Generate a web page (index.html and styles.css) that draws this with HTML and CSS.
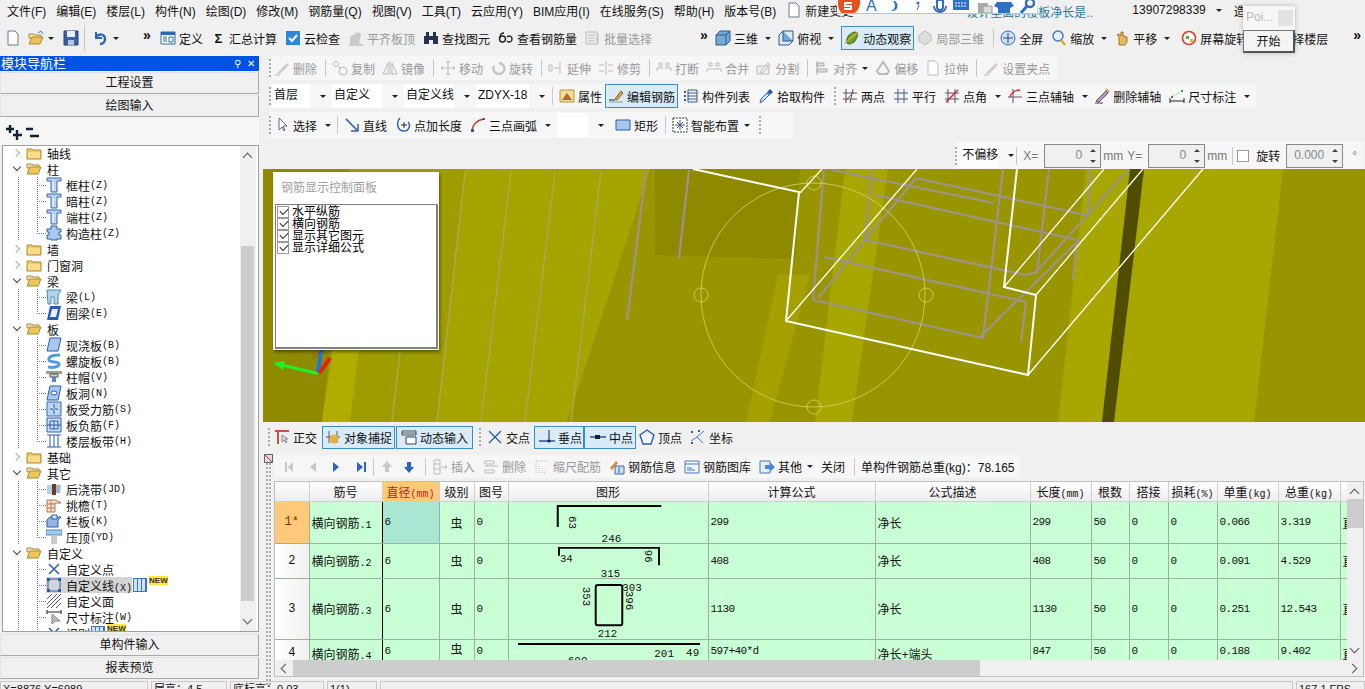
FILE: index.html
```html
<!DOCTYPE html>
<html lang="zh-CN">
<head>
    <meta charset="UTF-8">
    <title>钢筋算量</title>
    <link rel="stylesheet" href="styles.css">
</head>
<body>
<svg class="sprite" xmlns="http://www.w3.org/2000/svg">
    <symbol id="fold" viewBox="0 0 16 16"><path d="M1 4h5l1 1h8v9H1z" fill="#f3c95c" stroke="#a98a3c"/><path d="M2 7h12v6H2z" fill="#f9dc86"/></symbol>
    <symbol id="foldo" viewBox="0 0 16 16"><path d="M1 3h5l1 1h6v3H1z" fill="#f5e2a8" stroke="#a98a3c"/><path d="M1 13l3-7h11l-3 7z" fill="#f0c65a" stroke="#a98a3c"/></symbol>
    <symbol id="col" viewBox="0 0 16 16"><path d="M1 1h14v3h-4v11H5V4H1z" fill="#b9d3f2" stroke="#3a67b0"/><path d="M7 5v9" stroke="#fff"/></symbol>
    <symbol id="gz" viewBox="0 0 16 16"><path d="M5 1h6v3h4v3h-2v3h2v4h-4v1H5v-1H1v-4h2V7H1V4h4z" fill="#a9c8ee" stroke="#2f5ea8"/></symbol>
    <symbol id="beam" viewBox="0 0 16 16"><path d="M1 1h14l-3 5v9H8V8H5v7H2z" fill="#b4d4ee" stroke="#4a87bb"/></symbol>
    <symbol id="ring" viewBox="0 0 16 16"><path d="M4 1h11l-3 14H1z" fill="#2a5db0"/><path d="M6 4h6l-2 8H4z" fill="#e8f1fb"/></symbol>
    <symbol id="slab" viewBox="0 0 16 16"><path d="M4 1h11l-3 13H1z" fill="#a8c9ef" stroke="#2a5db0"/></symbol>
    <symbol id="spiral" viewBox="0 0 16 16"><path d="M14 2C6 2 2 4 3 7s10 1 10 4-6 4-11 3" fill="none" stroke="#4f9ae0" stroke-width="3"/></symbol>
    <symbol id="cap" viewBox="0 0 16 16"><path d="M0 2h16v3H0z" fill="#a29a8e"/><path d="M4 5h8v3H4z" fill="#c3d4ea" stroke="#555"/><path d="M6 8h4v5H6z" fill="#5c87c2"/></symbol>
    <symbol id="hole" viewBox="0 0 16 16"><path d="M4 1h11l-3 14H1z" fill="#a8c9ef" stroke="#2a5db0"/><ellipse cx="8" cy="8" rx="3" ry="2" fill="#fff" stroke="#2a5db0"/></symbol>
    <symbol id="bar1" viewBox="0 0 16 16"><path d="M1 1h14v14H1z" fill="#b8d3f0" stroke="#3a67b0"/><path d="M8 3v10M4 8h8" stroke="#2a5db0"/><path d="M5 5l6 6" stroke="#fff"/></symbol>
    <symbol id="bar2" viewBox="0 0 16 16"><path d="M1 1h14v14H1z" fill="#cde0f5" stroke="#2a5db0"/><path d="M4 4h8v8H4zM1 8h14M8 4v8" fill="none" stroke="#2a5db0"/></symbol>
    <symbol id="band" viewBox="0 0 16 16"><path d="M1 2h14M1 14h14M4 2v12M8 2v12M12 2v12" stroke="#2a5db0" fill="none"/></symbol>
    <symbol id="pour" viewBox="0 0 16 16"><path d="M1 4h5v9H1z" fill="#b8cde6"/><path d="M6 3h4v11H6z" fill="#6a3d24"/><path d="M10 4h5l-1 8h-4z" fill="#9cb8da"/></symbol>
    <symbol id="eave" viewBox="0 0 16 16"><path d="M1 3h9l5 3H9v9H1z" fill="#f7e3cf" stroke="#b5774a"/><path d="M1 7h8M1 11h8M5 3v12" stroke="#b5774a"/></symbol>
    <symbol id="rail" viewBox="0 0 16 16"><path d="M1 7l3-3h11l-3 3v7H1z" fill="#8fb7e0" stroke="#2a5db0"/><path d="M6 2h5v4H6z" fill="#dbe9f7" stroke="#2a5db0"/></symbol>
    <symbol id="top" viewBox="0 0 16 16"><path d="M0 1h16v5H0z" fill="#a8c9ef" stroke="#4a87bb"/><path d="M5 6h6v9H5z" fill="#c9c9c9"/></symbol>
    <symbol id="xp" viewBox="0 0 16 16"><path d="M3 3l10 10M13 3L3 13" stroke="#2a5db0" stroke-width="1.5"/></symbol>
    <symbol id="xl" viewBox="0 0 16 16"><path d="M2 2h12v12H2z" fill="none" stroke="#2a5db0"/><path d="M1 1h3v3H1zM12 1h3v3h-3zM1 12h3v3H1zM12 12h3v3h-3z" fill="#2a5db0"/></symbol>
    <symbol id="xa" viewBox="0 0 16 16"><path d="M1 6l5-5M1 11L11 1M1 15L15 1M5 15L15 5M10 15l5-5" stroke="#557" fill="none"/></symbol>
    <symbol id="dim" viewBox="0 0 16 16"><path d="M1 1v4M15 1v4M1 3h14" stroke="#222"/><path d="M6 5v10l3-3h5z" fill="#bbb" stroke="#888"/></symbol>
    <symbol id="new" viewBox="0 0 16 16"><path d="M3 1h7l3 3v11H3z" fill="#fff" stroke="#6a7a90"/></symbol>
    <symbol id="open" viewBox="0 0 16 16"><path d="M1 4h5l1 1h6v3H1z" fill="#f6e3a8" stroke="#a98a3c"/><path d="M1 14l3-7h11l-3 7z" fill="#efc253" stroke="#a98a3c"/><path d="M10 3l3-2 2 3" fill="none" stroke="#3a7bd0"/></symbol>
    <symbol id="save" viewBox="0 0 16 16"><path d="M1 1h14v14H1z" fill="#3d5fa8" stroke="#27407a"/><path d="M4 1h8v6H4z" fill="#e6edf7"/><path d="M5 10h6v5H5z" fill="#b8c4d8"/></symbol>
    <symbol id="undo" viewBox="0 0 16 16"><path d="M3 2v6h6" fill="none" stroke="#3164b8" stroke-width="2"/><path d="M3 7c3-4 9-3 9 2 0 3-2 5-5 5" fill="none" stroke="#3164b8" stroke-width="2.4"/></symbol>
    <symbol id="def" viewBox="0 0 16 16"><path d="M1 2h14v12H1z" fill="#fff" stroke="#2a6aa8"/><path d="M1 2h14v3H1z" fill="#2a6aa8"/><path d="M3 7h4M3 9h4M3 11h4M9 7h4v5H9z" stroke="#2a6aa8" fill="none"/></symbol>
    <symbol id="cloud" viewBox="0 0 16 16"><path d="M1 1h14v14H1z" fill="#2f86d6" rx="2"/><path d="M4 8l3 3 5-6" fill="none" stroke="#fff" stroke-width="2"/></symbol>
    <symbol id="align" viewBox="0 0 16 16"><path d="M2 14V7l8-5 3 2-2 10z" fill="#c9c9c9"/><path d="M1 15h14" stroke="#aaa"/></symbol>
    <symbol id="find" viewBox="0 0 16 16"><path d="M1 6h5v8H1zM10 6h5v8h-5zM3 2h3v4H3zM10 2h3v4h-3zM6 6h4v4H6z" fill="#24344e"/></symbol>
    <symbol id="see" viewBox="0 0 16 16"><circle cx="4.5" cy="9" r="3" fill="none" stroke="#222" stroke-width="1.4"/><path d="M2 8c0-3 1-5 4-5" fill="none" stroke="#222" stroke-width="1.4"/><path d="M9 7c2-2 5-1 5 2s-3 4-5 2" fill="none" stroke="#222" stroke-width="1.4"/></symbol>
    <symbol id="batch" viewBox="0 0 16 16"><path d="M1 2h11v12H1z" fill="#eee" stroke="#bbb"/><path d="M3 5h7M3 8h7M3 11h7M13 4v10" stroke="#bbb"/></symbol>
    <symbol id="d3" viewBox="0 0 16 16"><path d="M1 5l4-4h10v10l-4 4H1z" fill="#76a8d6" stroke="#2a5a8c"/><path d="M1 5h10v10M11 5l4-4" fill="none" stroke="#2a5a8c"/></symbol>
    <symbol id="plan" viewBox="0 0 16 16"><path d="M1 5l4-4h10v10l-4 4H1z" fill="#dbe9f7" stroke="#2a5a8c"/><path d="M5 1v10h10" fill="#76a8d6" stroke="#2a5a8c"/></symbol>
    <symbol id="orbit" viewBox="0 0 16 16"><ellipse cx="8" cy="8" rx="4" ry="7" transform="rotate(40 8 8)" fill="#6aa52d" stroke="#3c6a12"/><path d="M1 13L14 2" stroke="#e2a92d" stroke-width="1.5"/></symbol>
    <symbol id="part" viewBox="0 0 16 16"><path d="M8 1l6 4v6l-6 4-6-4V5z" fill="#ddd" stroke="#bbb"/></symbol>
    <symbol id="full" viewBox="0 0 16 16"><circle cx="8" cy="8" r="7" fill="#cfe0f5" stroke="#3a67b0"/><path d="M8 3v10M3 8h10" stroke="#24447e"/></symbol>
    <symbol id="zoom" viewBox="0 0 16 16"><circle cx="7" cy="6" r="5" fill="#e8f1fb" stroke="#4a76b8" stroke-width="1.4"/><path d="M10 10l4 5" stroke="#d6a63a" stroke-width="2.4"/></symbol>
    <symbol id="pan" viewBox="0 0 16 16"><path d="M5 15V7L3 5l2-1 2 2V2h2v4h2v1h2v5l-2 3z" fill="#e9b75d" stroke="#9a7530"/></symbol>
    <symbol id="rot" viewBox="0 0 16 16"><circle cx="8" cy="8" r="6.5" fill="#fff" stroke="#d7402c" stroke-width="1.6"/><path d="M5 6h3v3H5z" fill="#4aa84a"/><path d="M9 9h3v3H9z" fill="#e2b32d"/></symbol>
    <symbol id="del" viewBox="0 0 16 16"><path d="M3 13L13 3l2 2-9 9z" fill="#ccc"/><path d="M1 15h5" stroke="#bbb"/></symbol>
    <symbol id="copy" viewBox="0 0 16 16"><circle cx="4" cy="4" r="2.5" fill="none" stroke="#bbb"/><circle cx="11" cy="11" r="4" fill="none" stroke="#bbb"/><path d="M7 7l2 2" stroke="#bbb"/></symbol>
    <symbol id="mirror" viewBox="0 0 16 16"><path d="M8 1v14M6 3L1 14h5zM10 3l5 11h-5z" fill="none" stroke="#bbb"/></symbol>
    <symbol id="move" viewBox="0 0 16 16"><path d="M8 1v14M1 8h14M8 1L6 3M8 1l2 2M8 15l-2-2M8 15l2-2M1 8l2-2M1 8l2 2M15 8l-2-2M15 8l-2 2" stroke="#bbb" fill="none"/></symbol>
    <symbol id="turn" viewBox="0 0 16 16"><path d="M9 3a5.5 5.5 0 1 1-5 3" fill="none" stroke="#c4c4c4" stroke-width="2.4"/></symbol>
    <symbol id="ext" viewBox="0 0 16 16"><path d="M1 5h3v6H1zM6 8h5M12 2v12" stroke="#bbb" fill="none"/></symbol>
    <symbol id="trim" viewBox="0 0 16 16"><path d="M8 1v14M1 5h5M10 5h5M1 11h5M10 11h5" stroke="#bbb" fill="none"/></symbol>
    <symbol id="brk" viewBox="0 0 16 16"><path d="M1 11V8h6M9 8h6v3M3 3h3v3H3zM10 3h3v3h-3z" stroke="#bbb" fill="none"/></symbol>
    <symbol id="merge" viewBox="0 0 16 16"><path d="M1 12V9h14v3M3 3h3v3H3zM10 3h3v3h-3z" stroke="#bbb" fill="none"/></symbol>
    <symbol id="split" viewBox="0 0 16 16"><path d="M1 14h12V6H1zM4 12l8-9 2 2-8 8z" fill="#eee" stroke="#bbb"/></symbol>
    <symbol id="alg" viewBox="0 0 16 16"><path d="M3 1v14M3 3h7v3H3zM3 9h10v3H3z" fill="#ddd" stroke="#aaa"/></symbol>
    <symbol id="off" viewBox="0 0 16 16"><path d="M2 11l6-9 6 9-2 3H4z" fill="none" stroke="#bbb" stroke-width="2"/></symbol>
    <symbol id="str" viewBox="0 0 16 16"><path d="M3 1h7l3 3v11H3z" fill="#fff" stroke="#bbb"/></symbol>
    <symbol id="attr" viewBox="0 0 16 16"><path d="M1 2h14v12H1z" fill="#f5dd95" stroke="#b5954a"/><path d="M3 12l5-7 5 7z" fill="#a66d2a"/></symbol>
    <symbol id="edit" viewBox="0 0 16 16"><path d="M1 12h6" stroke="#222"/><path d="M7 11l6-8 2 2-6 7z" fill="#e9a94a" stroke="#80602a"/><path d="M1 14h14" stroke="#999"/></symbol>
    <symbol id="list" viewBox="0 0 16 16"><path d="M5 2h9v12H5zM5 5h9M5 8h9M5 11h9" fill="none" stroke="#355a90"/><path d="M1 3h2v2H1zM1 7h2v2H1zM1 11h2v2H1z" fill="#355a90"/></symbol>
    <symbol id="pick" viewBox="0 0 16 16"><path d="M2 15l1-4 6-6 2 2-6 6z" fill="#cfe4f7" stroke="#2a5db0"/><path d="M9 4l3-3 3 3-3 3z" fill="#2a5db0"/></symbol>
    <symbol id="two" viewBox="0 0 16 16"><path d="M4 1v14M11 1L8 15M1 5h14M1 11h14" stroke="#556" fill="none"/><path d="M3 13l9-9" stroke="#c33"/></symbol>
    <symbol id="para" viewBox="0 0 16 16"><path d="M5 1v14M11 1v14M1 5h14M1 11h14" stroke="#3a5a90" fill="none"/></symbol>
    <symbol id="ang" viewBox="0 0 16 16"><path d="M4 1v14M11 1v14M1 5h14M1 11h14" stroke="#556" fill="none"/><path d="M2 14L14 2" stroke="#d22" stroke-width="1.5"/></symbol>
    <symbol id="tri" viewBox="0 0 16 16"><path d="M6 1v14M1 9h14" stroke="#556"/><path d="M3 9c1-4 5-7 10-7" fill="none" stroke="#d22" stroke-width="1.4"/></symbol>
    <symbol id="dela" viewBox="0 0 16 16"><path d="M2 13L12 3l2 2-9 9z" fill="#b79bdc" stroke="#555"/><path d="M1 15h8" stroke="#444"/><path d="M12 1l3 3" stroke="#d6a63a" stroke-width="2"/></symbol>
    <symbol id="dima" viewBox="0 0 16 16"><path d="M1 10v5M15 10v5M1 13h14" stroke="#222"/><path d="M2 8h2v2H2zM12 2h2v2h-2z" fill="#3a9a4a"/><path d="M4 8l8-4" stroke="#3a9a4a" stroke-dasharray="1 2"/></symbol>
    <symbol id="arrow" viewBox="0 0 16 16"><path d="M5 1v12l3-3 2 4 1-1-2-4h4z" fill="#fff" stroke="#667"/></symbol>
    <symbol id="line" viewBox="0 0 16 16"><path d="M2 2l11 11" stroke="#2a5db0" stroke-width="1.6"/><path d="M14 7v7H7" fill="none" stroke="#2a5db0" stroke-width="1.4"/></symbol>
    <symbol id="plen" viewBox="0 0 16 16"><path d="M5 1C1 5 2 13 8 14s8-6 5-9" fill="none" stroke="#2a5db0" stroke-width="1.4"/><path d="M9 5v6M6 8h6" stroke="#222"/></symbol>
    <symbol id="arc" viewBox="0 0 16 16"><path d="M2 15C2 8 7 3 14 2" fill="none" stroke="#c0392b" stroke-width="1.4"/><path d="M1 12h3v3H1zM13 1h2v2h-2z" fill="#2a5db0"/></symbol>
    <symbol id="rect" viewBox="0 0 16 16"><path d="M1 3h14v10H1z" fill="#a9c6ee" stroke="#2f5ea8"/></symbol>
    <symbol id="auto" viewBox="0 0 16 16"><path d="M1 1h14v14H1z" fill="#fff" stroke="#333" stroke-dasharray="2 1"/><path d="M8 3v10M3 8h10" stroke="#2a5db0"/><path d="M5 5l6 6M11 5l-6 6" stroke="#555"/></symbol>
    <symbol id="ortho" viewBox="0 0 16 16"><path d="M1 2h14M4 2v13" stroke="#c4563a" stroke-width="2"/><path d="M8 6v7l2-2 2 3 1-1-2-3h3z" fill="#ddd" stroke="#889"/></symbol>
    <symbol id="snap" viewBox="0 0 16 16"><path d="M1 8h14M4 2v12M12 2v12" stroke="#556"/><circle cx="9" cy="10" r="4.5" fill="#e6b23d"/></symbol>
    <symbol id="dyn" viewBox="0 0 16 16"><path d="M1 2h14v4H1z" fill="#fff" stroke="#345"/><path d="M5 8h10v7H5z" fill="#fff" stroke="#345"/><path d="M1 4h14" stroke="#345"/></symbol>
    <symbol id="cross" viewBox="0 0 16 16"><path d="M2 2l12 12M14 2L2 14" stroke="#2a5db0" stroke-width="1.4"/></symbol>
    <symbol id="perp" viewBox="0 0 16 16"><path d="M0 12h16" stroke="#2a5db0" stroke-width="1.6"/><path d="M10 1v10" stroke="#222"/><circle cx="10" cy="12" r="1.6" fill="#222"/></symbol>
    <symbol id="mid" viewBox="0 0 16 16"><path d="M0 8h16" stroke="#2a5db0" stroke-width="1.6"/><path d="M5 6h5v4H5z" fill="#222"/></symbol>
    <symbol id="vert" viewBox="0 0 16 16"><path d="M8 1l7 5-3 9H4L1 6z" fill="#f2f7fd" stroke="#2a5db0" stroke-width="1.4"/></symbol>
    <symbol id="coord" viewBox="0 0 16 16"><path d="M1 12l6-4 6 6M7 8l7-6" stroke="#3a7ad0" fill="none"/><path d="M1 2h2v2H1zM8 1h2v2H8zM1 13h2v2H1z" fill="#555"/></symbol>
    <symbol id="ins" viewBox="0 0 16 16"><path d="M2 1h6v14H2zM2 5h6M2 10h6M9 8h6M13 6l2 2-2 2" fill="none" stroke="#bbb"/></symbol>
    <symbol id="rem" viewBox="0 0 16 16"><path d="M2 2h9v3H2zM2 7h13M2 11h9v3H2z" fill="none" stroke="#bbb"/></symbol>
    <symbol id="scale" viewBox="0 0 16 16"><path d="M2 3v12M5 7v8M8 9v6M11 11v4M2 2h12" stroke="#bbb" stroke-dasharray="1 1"/></symbol>
    <symbol id="info" viewBox="0 0 16 16"><path d="M6 7h9v8H6z" fill="#cfe0f5" stroke="#3a67b0"/><path d="M1 9l6-7 2 2-6 7z" fill="#d98a3a"/><path d="M10 8v6" stroke="#3a67b0"/></symbol>
    <symbol id="lib" viewBox="0 0 16 16"><path d="M1 2h14v12H1z" fill="#f2f7fd" stroke="#4a76b8"/><path d="M1 5h14" stroke="#4a76b8"/><path d="M3 9h5M3 11h8" stroke="#4a76b8"/></symbol>
    <symbol id="more" viewBox="0 0 16 16"><path d="M1 2h10v12H1z" fill="#e5eef9" stroke="#4a76b8"/><path d="M6 6h5V3l5 5-5 5v-3H6z" fill="#4a8ad4"/></symbol>
</svg>

<header class="menubar">
    <span>文件(F)</span><span>编辑(E)</span><span>楼层(L)</span><span>构件(N)</span><span>绘图(D)</span><span>修改(M)</span><span>钢筋量(Q)</span><span>视图(V)</span><span>工具(T)</span><span>云应用(Y)</span><span>BIM应用(I)</span><span>在线服务(S)</span><span>帮助(H)</span><span>版本号(B)</span>
    <span class="tool newjob"><svg class="ico"><use href="#new"/></svg>新建变更</span>
    <span class="tip">设计里面的楼板净长是..</span>
    <span class="phone">13907298339</span><i class="arr"></i>
    <span class="cost">造价豆</span>
</header>

<div class="ime">
    <svg viewBox="0 0 262 14" width="262" height="14">
        <path d="M1 0h22c1 9-5 15-12 15S0 10 1 0z" fill="#e8501f"/><path d="M15 3H8v3h6v3H7" fill="none" stroke="#fff" stroke-width="2"/>
        <path d="M56 1c3 3 3 8-2 10 6 1 9-6 4-10z" fill="#2f6fc4"/>
        <circle cx="81" cy="3" r="1.6" fill="#2f6fc4"/><path d="M82 5l-2 5" stroke="#2f6fc4"/>
        <path d="M100 0h6v7a3 3 0 0 1-6 0zM97 6c0 8 12 8 12 0M103 11v3" fill="none" stroke="#2f6fc4" stroke-width="2"/>
        <path d="M116 0h16v10h-16z" fill="#2f6fc4"/><path d="M118 3h12M118 6h12" stroke="#fff" stroke-dasharray="2 1"/>
        <path d="M141 3h10v10h-10z" fill="#aaa"/><path d="M146 6h9v7h-9z" fill="#ddd" stroke="#999"/>
        <path d="M160 2h14l3 4-4 2v6h-12V8l-4-2z" fill="#2f6fc4"/>
        <circle cx="193" cy="3" r="4" fill="none" stroke="#2f6fc4" stroke-width="2.5"/><path d="M190 6l-6 7" stroke="#2f6fc4" stroke-width="3"/>
    </svg>
    <b class="ime-a">A</b>
</div>

<div class="popup">
    <div class="popup-head">Poi...<i></i></div>
    <div class="popup-btn">开始</div>
</div>

<div class="topbar">
    <svg class="ico first"><use href="#new"/></svg>
    <svg class="ico"><use href="#open"/></svg><i class="arr"></i>
    <svg class="ico save"><use href="#save"/></svg>
    <i class="sep tall"></i>
    <svg class="ico"><use href="#undo"/></svg><i class="arr"></i>
    <span class="more">»</span>
    <span class="tool"><svg class="ico"><use href="#def"/></svg>定义</span>
    <span class="tool"><b class="sum">Σ</b>汇总计算</span>
    <span class="tool"><svg class="ico"><use href="#cloud"/></svg>云检查</span>
    <span class="tool off"><svg class="ico"><use href="#align"/></svg>平齐板顶</span>
    <span class="tool"><svg class="ico"><use href="#find"/></svg>查找图元</span>
    <span class="tool"><svg class="ico"><use href="#see"/></svg>查看钢筋量</span>
    <span class="tool off"><svg class="ico"><use href="#batch"/></svg>批量选择</span>
    <span class="more far">»</span>
    <span class="tool drop"><svg class="ico"><use href="#d3"/></svg>三维<i class="arr"></i></span>
    <span class="tool drop"><svg class="ico"><use href="#plan"/></svg>俯视<i class="arr"></i></span>
    <span class="tool active"><svg class="ico"><use href="#orbit"/></svg>动态观察</span>
    <span class="tool off"><svg class="ico"><use href="#part"/></svg>局部三维</span>
    <i class="sep"></i>
    <span class="tool"><svg class="ico"><use href="#full"/></svg>全屏</span>
    <span class="tool drop"><svg class="ico"><use href="#zoom"/></svg>缩放<i class="arr"></i></span>
    <span class="tool drop wide"><svg class="ico"><use href="#pan"/></svg>平移<i class="arr"></i></span>
    <span class="tool"><svg class="ico"><use href="#rot"/></svg>屏幕旋转</span>
    <span class="tool floor">选择楼层</span>
    <span class="more end">»</span>
</div>

<div class="work">
    <aside class="nav">
        <div class="nav-title"><span>模块导航栏</span><span class="pin">⚲ &nbsp;✕</span></div>
        <div class="nav-btn">工程设置</div>
        <div class="nav-btn">绘图输入</div>
        <div class="nav-tools">
            <svg width="34" height="16" viewBox="0 0 34 16"><path d="M4 0v8M0 4h8M11 5v10M7 10h9" stroke="#123" stroke-width="2.4" fill="none"/><path d="M20 4h7M24 11h9" stroke="#123" stroke-width="2.4"/></svg>
        </div>
        <div class="tree">
            <div class="tree-list">
                <div class="node"><i class="exp"></i><svg class="ico"><use href="#fold"/></svg>轴线</div>
                <div class="node"><i class="exp open"></i><svg class="ico"><use href="#foldo"/></svg>柱</div>
                <div class="leaf"><svg class="ico"><use href="#col"/></svg>框柱<em>(Z)</em></div>
                <div class="leaf"><svg class="ico"><use href="#col"/></svg>暗柱<em>(Z)</em></div>
                <div class="leaf"><svg class="ico"><use href="#col"/></svg>端柱<em>(Z)</em></div>
                <div class="leaf last"><svg class="ico"><use href="#gz"/></svg>构造柱<em>(Z)</em></div>
                <div class="node"><i class="exp"></i><svg class="ico"><use href="#fold"/></svg>墙</div>
                <div class="node"><i class="exp"></i><svg class="ico"><use href="#fold"/></svg>门窗洞</div>
                <div class="node"><i class="exp open"></i><svg class="ico"><use href="#foldo"/></svg>梁</div>
                <div class="leaf"><svg class="ico"><use href="#beam"/></svg>梁<em>(L)</em></div>
                <div class="leaf last"><svg class="ico"><use href="#ring"/></svg>圈梁<em>(E)</em></div>
                <div class="node"><i class="exp open"></i><svg class="ico"><use href="#foldo"/></svg>板</div>
                <div class="leaf"><svg class="ico"><use href="#slab"/></svg>现浇板<em>(B)</em></div>
                <div class="leaf"><svg class="ico"><use href="#spiral"/></svg>螺旋板<em>(B)</em></div>
                <div class="leaf"><svg class="ico"><use href="#cap"/></svg>柱帽<em>(V)</em></div>
                <div class="leaf"><svg class="ico"><use href="#hole"/></svg>板洞<em>(N)</em></div>
                <div class="leaf"><svg class="ico"><use href="#bar1"/></svg>板受力筋<em>(S)</em></div>
                <div class="leaf"><svg class="ico"><use href="#bar2"/></svg>板负筋<em>(F)</em></div>
                <div class="leaf last"><svg class="ico"><use href="#band"/></svg>楼层板带<em>(H)</em></div>
                <div class="node"><i class="exp"></i><svg class="ico"><use href="#fold"/></svg>基础</div>
                <div class="node"><i class="exp open"></i><svg class="ico"><use href="#foldo"/></svg>其它</div>
                <div class="leaf"><svg class="ico"><use href="#pour"/></svg>后浇带<em>(JD)</em></div>
                <div class="leaf"><svg class="ico"><use href="#eave"/></svg>挑檐<em>(T)</em></div>
                <div class="leaf"><svg class="ico"><use href="#rail"/></svg>栏板<em>(K)</em></div>
                <div class="leaf last"><svg class="ico"><use href="#top"/></svg>压顶<em>(YD)</em></div>
                <div class="node"><i class="exp open"></i><svg class="ico"><use href="#foldo"/></svg>自定义</div>
                <div class="leaf"><svg class="ico"><use href="#xp"/></svg>自定义点</div>
                <div class="leaf sel-leaf"><svg class="ico"><use href="#xl"/></svg><span class="hl">自定义线<em>(X)</em></span><i class="grid-ico"></i><b class="tag">NEW</b></div>
                <div class="leaf"><svg class="ico"><use href="#xa"/></svg>自定义面</div>
                <div class="leaf"><svg class="ico"><use href="#dim"/></svg>尺寸标注<em>(W)</em></div>
                <div class="leaf"><svg class="ico"><use href="#xp"/></svg>识别<i class="grid-ico"></i><b class="tag">NEW</b></div>
            </div>
            <div class="tree-scroll">
                <span class="chev up"></span>
                <div class="tree-thumb"></div>
                <span class="chev down"></span>
            </div>
        </div>
        <div class="nav-btn low">单构件输入</div>
        <div class="nav-btn">报表预览</div>
    </aside>

    <main class="panel">
        <div class="row">
            <div class="bar off-all">
                <i class="grip"></i>
                <span class="tool"><svg class="ico"><use href="#del"/></svg>删除</span><i class="sep"></i>
                <span class="tool"><svg class="ico"><use href="#copy"/></svg>复制</span>
                <span class="tool"><svg class="ico"><use href="#mirror"/></svg>镜像</span><i class="sep"></i>
                <span class="tool"><svg class="ico"><use href="#move"/></svg>移动</span>
                <span class="tool"><svg class="ico"><use href="#turn"/></svg>旋转</span><i class="sep"></i>
                <span class="tool"><svg class="ico"><use href="#ext"/></svg>延伸</span>
                <span class="tool"><svg class="ico"><use href="#trim"/></svg>修剪</span><i class="sep"></i>
                <span class="tool"><svg class="ico"><use href="#brk"/></svg>打断</span>
                <span class="tool"><svg class="ico"><use href="#merge"/></svg>合并</span>
                <span class="tool"><svg class="ico"><use href="#split"/></svg>分割</span><i class="sep"></i>
                <span class="tool drop-s"><svg class="ico"><use href="#alg"/></svg>对齐<i class="arr"></i></span>
                <span class="tool"><svg class="ico"><use href="#off"/></svg>偏移</span>
                <span class="tool"><svg class="ico"><use href="#str"/></svg>拉伸</span><i class="sep"></i>
                <span class="tool"><svg class="ico"><use href="#del"/></svg>设置夹点</span>
            </div>
        </div>
        <div class="row row-b">
            <div class="bar">
                <i class="grip"></i>
                <span class="sel w60"><b>首层</b><i class="arr"></i></span>
                <span class="sel w72"><b>自定义</b><i class="arr"></i></span>
                <span class="sel w72"><b>自定义线</b><i class="arr"></i></span>
                <span class="sel w75"><b>ZDYX-18</b><i class="arr"></i></span>
                <i class="sep"></i>
                <span class="tool"><svg class="ico"><use href="#attr"/></svg>属性</span>
                <span class="tool active slim"><svg class="ico"><use href="#edit"/></svg>编辑钢筋</span>
                <span class="tool"><svg class="ico"><use href="#list"/></svg>构件列表</span>
                <span class="tool"><svg class="ico"><use href="#pick"/></svg>拾取构件</span>
                <i class="grip mid"></i>
                <span class="tool"><svg class="ico"><use href="#two"/></svg>两点</span>
                <span class="tool"><svg class="ico"><use href="#para"/></svg>平行</span>
                <span class="tool drop"><svg class="ico"><use href="#ang"/></svg>点角<i class="arr"></i></span>
                <span class="tool drop"><svg class="ico"><use href="#tri"/></svg>三点辅轴<i class="arr"></i></span>
                <span class="tool"><svg class="ico"><use href="#dela"/></svg>删除辅轴</span>
                <span class="tool drop"><svg class="ico"><use href="#dima"/></svg>尺寸标注<i class="arr"></i></span>
            </div>
        </div>
        <div class="row row-b tall-row">
            <div class="bar">
                <i class="grip"></i>
                <span class="tool drop"><svg class="ico"><use href="#arrow"/></svg>选择<i class="arr"></i></span>
                <i class="sep"></i>
                <span class="tool"><svg class="ico"><use href="#line"/></svg>直线</span>
                <span class="tool"><svg class="ico"><use href="#plen"/></svg>点加长度</span>
                <span class="tool drop"><svg class="ico"><use href="#arc"/></svg>三点画弧<i class="arr"></i></span>
                <span class="sel blank"><b></b><i class="arr"></i></span>
                <span class="tool rect-tool"><svg class="ico"><use href="#rect"/></svg>矩形</span>
                <i class="sep"></i>
                <span class="tool drop-s"><svg class="ico"><use href="#auto"/></svg>智能布置<i class="arr"></i></span>
                <i class="grip mid"></i>
                <span class="stub"></span>
            </div>
        </div>
        <div class="row offset-row">
            <div class="bar">
                <i class="grip"></i>
                <span class="sel w55"><b>不偏移</b><i class="arr"></i></span>
                <i class="sep"></i>
                <span class="lbl">X=</span><span class="spin"><b>0</b></span>
                <span class="lbl unit">mm</span><span class="lbl">Y=</span><span class="spin"><b>0</b></span>
                <span class="lbl unit">mm</span><i class="sep near"></i>
                <i class="check"></i>
                <span class="rot-lbl">旋转</span><span class="spin"><b>0.000</b></span>
                <span class="lbl deg">°</span>
            </div>
        </div>

        <div class="view">
            <svg class="scene" viewBox="263 169 1102 253" width="1102" height="253">
                <path d="M263 169h1102v253H263z" fill="#999500"/>
                <path d="M263 169h90l-25 253h-65z" fill="#8f8b00"/>
                <path d="M350 169h115l-28 253h-115z" fill="#9f9c00"/>
                <path d="M340 300h25l-15 122h-28z" fill="#b0ad00"/>
                <path d="M465 169h185l-83 253H437z" fill="#a6a400"/>
                <path d="M655 169h145l-4 90-141-4z" fill="#8e8a00"/>
                <path d="M845 169h43l-36 253h-37z" fill="#a8a600"/>
                <path d="M778 275h32l-40 147h-24z" fill="#a3a000"/>
                <path d="M1086 169h44l-28 253h-44z" fill="#a8a600"/>
                <path d="M1144 169h139l-29 253h-140z" fill="#a8a600"/>
                <path d="M1130 169h14l-30 253h-12z" fill="#504c00"/>
                <g class="faint">
                    <path d="M465 172l-28 250M511 172l-30 250M555 172l-30 250M601 172l-30 250M400 352l-8 70"/>
                </g>
                <g class="rebar">
                    <path d="M689 170l-10 88M646 172l-19 148"/>
                    <path d="M813 300l170 38M824 257l202 45M865 240l161 35M875 195l202 45M831 170l163 33M916 178l170 37"/>
                    <path d="M824 169l-11 131M872 169l-7 71M1003 169l-20 169M1049 169l-12 104M1026 302l-5 40M1077 240l-4 40M1090 169l-2 46"/>
                    <path d="M865 240l51-62M818 298l47-58M980 337l99-97M1036 272l92-102M1026 275l10-3"/>
                </g>
                <g class="axis-ring">
                    <circle cx="813" cy="295" r="112"/>
                    <circle cx="701" cy="295" r="7"/><circle cx="926" cy="295" r="7"/><circle cx="814" cy="183" r="7"/><circle cx="814" cy="407" r="7"/>
                </g>
                <g class="thin-white">
                    <path d="M786 321l131-152M1028 375l175-206M1036 295l107-126M1004 287l100-118M800 193l22-24"/>
                </g>
                <g class="wire">
                    <path d="M693 169l106 23-13 129 242 54 8-80-32-8 13-118"/>
                </g>
                <path d="M318 372l-34-8 1-3-12 2 10 7 1-3 33 8z" fill="#22f02c"/>
                <path d="M316 372l3-22h4l-3 22z" fill="#1e74d8"/>
                <path d="M318 372l10-15 4 2-11 15z" fill="#e81e10"/>
                <path d="M312 352l8 7M320 352l-8 7" stroke="#a0522d"/>
            </svg>
            <div class="rebar-box">
                <div class="rebar-title">钢筋显示控制面板</div>
                <div class="rebar-list">
                    <label><i class="check on"></i>水平纵筋</label>
                    <label><i class="check on"></i>横向钢筋</label>
                    <label><i class="check on"></i>显示其它图元</label>
                    <label><i class="check on"></i>显示详细公式</label>
                </div>
            </div>
        </div>

        <div class="snapbar">
            <i class="grip"></i>
            <span class="tool ortho"><svg class="ico"><use href="#ortho"/></svg>正交</span>
            <span class="tool on s1"><svg class="ico"><use href="#snap"/></svg>对象捕捉</span>
            <span class="tool on s2"><svg class="ico"><use href="#dyn"/></svg>动态输入</span>
            <i class="grip"></i>
            <span class="tool"><svg class="ico"><use href="#cross"/></svg>交点</span>
            <span class="tool on s3"><svg class="ico"><use href="#perp"/></svg>垂点</span>
            <span class="tool on s4"><svg class="ico"><use href="#mid"/></svg>中点</span>
            <span class="tool wide"><svg class="ico"><use href="#vert"/></svg>顶点</span>
            <span class="tool"><svg class="ico"><use href="#coord"/></svg>坐标</span>
        </div>

        <div class="editor">
            <div class="side-grip"><span class="x-mark"></span></div>
            <div class="editor-body">
                <div class="rebar-bar">
                    <span class="nav-arrows">
                        <svg width="100" height="14" viewBox="0 0 100 14"><path d="M1 2h2v10H1zM9 2v10L4 7z" fill="#c8c8c8"/><path d="M32 2v10l-6-5z" fill="#c8c8c8"/><path d="M49 2v10l6-5z" fill="#2a62c8"/><path d="M73 2v10l6-5zM80 2h2v10h-2z" fill="#2a62c8"/></svg>
                    </span>
                    <i class="sep"></i>
                    <svg class="arrows" width="38" height="14" viewBox="0 0 38 14"><path d="M5 1l5 6H7v5H3V7H0z" fill="#c8c8c8"/><path d="M27 13l5-6h-3V2h-4v5h-3z" fill="#2a62c8"/></svg>
                    <i class="sep"></i>
                    <span class="tool off"><svg class="ico"><use href="#ins"/></svg>插入</span>
                    <span class="tool off"><svg class="ico"><use href="#rem"/></svg>删除</span>
                    <span class="tool off"><svg class="ico"><use href="#scale"/></svg>缩尺配筋</span>
                    <span class="tool"><svg class="ico"><use href="#info"/></svg>钢筋信息</span>
                    <span class="tool"><svg class="ico"><use href="#lib"/></svg>钢筋图库</span>
                    <span class="tool drop-s"><svg class="ico"><use href="#more"/></svg>其他<i class="arr"></i></span>
                    <span class="tool">关闭</span>
                    <i class="sep"></i>
                    <span class="total">单构件钢筋总重(kg)：78.165</span>
                </div>
                <div class="grid-box">
                    <div class="grid-top">
                        <div class="grid-clip">
                            <table class="grid">
                                <thead>
                                    <tr><th></th><th>筋号</th><th class="cur">直径<em>(mm)</em></th><th>级别</th><th>图号</th><th>图形</th><th>计算公式</th><th>公式描述</th><th>长度<em>(mm)</em></th><th>根数</th><th>搭接</th><th>损耗<em>(%)</em></th><th>单重<em>(kg)</em></th><th>总重<em>(kg)</em></th><th></th></tr>
                                </thead>
                                <tbody>
                                    <tr class="r1">
                                        <td class="head cur mark">1*</td><td>横向钢筋<em>.1</em></td><td class="num cell-on">6</td><td class="ctr">虫</td><td class="num">0</td>
                                        <td class="shape"><svg viewBox="508 501 200 41"><path d="M557 526v-21h104"/><text x="572" y="511" transform="rotate(90 568 511)">63</text><text x="611" y="541" text-anchor="middle">246</text></svg></td>
                                        <td class="num">299</td><td>净长</td><td class="num">299</td><td class="num">50</td><td class="num">0</td><td class="num">0</td><td class="num">0.066</td><td class="num">3.319</td><td>直</td>
                                    </tr>
                                    <tr class="r2">
                                        <td class="head">2</td><td>横向钢筋<em>.2</em></td><td class="num">6</td><td class="ctr">虫</td><td class="num">0</td>
                                        <td class="shape"><svg viewBox="508 543 200 35"><path d="M557 555v-8h103v18"/><text x="558" y="562">34</text><text x="646" y="549" transform="rotate(90 646 549)">96</text><text x="610" y="577" text-anchor="middle" class="hang">315</text></svg></td>
                                        <td class="num">408</td><td>净长</td><td class="num">408</td><td class="num">50</td><td class="num">0</td><td class="num">0</td><td class="num">0.091</td><td class="num">4.529</td><td>直</td>
                                    </tr>
                                    <tr class="r3">
                                        <td class="head">3</td><td>横向钢筋<em>.3</em></td><td class="num">6</td><td class="ctr">虫</td><td class="num">0</td>
                                        <td class="shape"><svg viewBox="508 578 200 61"><path d="M597 584h23q2 0 2 2v37q0 2-2 2h-23q-2 0-2-2v-37q0-2 2-2z"/><text x="622" y="590">303</text><text x="582" y="586" transform="rotate(90 582 586)">353</text><text x="626" y="590" transform="rotate(90 626 590)">396</text><text x="607" y="637" text-anchor="middle">212</text></svg></td>
                                        <td class="num">1130</td><td>净长</td><td class="num">1130</td><td class="num">50</td><td class="num">0</td><td class="num">0</td><td class="num">0.251</td><td class="num">12.543</td><td>直</td>
                                    </tr>
                                    <tr class="r4">
                                        <td class="head">4</td><td>横向钢筋<em>.4</em></td><td class="num">6</td><td class="ctr">虫</td><td class="num">0</td>
                                        <td class="shape"><svg viewBox="508 639 200 40"><path d="M517 643h183"/><text x="577" y="663" text-anchor="middle">600</text><text x="654" y="656">201</text><text x="686" y="655">49</text></svg></td>
                                        <td class="num">597+40*d</td><td>净长+端头</td><td class="num">847</td><td class="num">50</td><td class="num">0</td><td class="num">0</td><td class="num">0.188</td><td class="num">9.402</td><td>直</td>
                                    </tr>
                                </tbody>
                            </table>
                        </div>
                        <div class="vscroll"><span class="chev up"></span><div class="vthumb"></div><span class="chev down"></span></div>
                    </div>
                    <div class="hscroll"><span class="chev left"></span><div class="hthumb"></div><span class="chev right"></span></div>
                </div>
            </div>
        </div>
    </main>
</div>

<footer class="status">
    <span class="st-xy">X=8876 Y=6989</span>
    <span class="st-h">层高：4.5</span>
    <span class="st-b">底标高：0.03</span>
    <span class="st-n">1(1)</span>
    <span class="st-fill"></span>
    <span class="st-fps">167.1 FPS</span>
</footer>
</body>
</html>
```
FILE: styles.css
```css
* {
    box-sizing: border-box;
}

html, body {
    height: 689px;
    overflow: hidden;
}

body {
    margin: 0;
    position: relative;
    width: 1365px;
    background-color: #f0f0f0;
    color: #111;
    font: 12px "Liberation Sans", "Noto Sans CJK SC", sans-serif;
    display: flex;
    flex-direction: column;
}

i, em {
    font-style: normal;
}

.sprite {
    position: absolute;
    width: 0;
    height: 0;
}

.ico {
    width: 16px;
    height: 16px;
    flex: none;
}

.arr {
    width: 0;
    height: 0;
    flex: none;
    border-top: 3px solid #222;
    border-left: 3px solid transparent;
    border-right: 3px solid transparent;
}

.sep {
    width: 1px;
    height: 18px;
    flex: none;
    margin: 0 6px 0 1px;
    background-color: #c8c8c8;
}

.grip {
    width: 2px;
    height: 18px;
    flex: none;
    margin-right: 3px;
    background: repeating-linear-gradient(to bottom, #aaa 0 2px, transparent 2px 4px);
}

.grip.mid {
    margin: 0 6px 0 1px;
}

.tool {
    display: flex;
    align-items: center;
    gap: 3px;
    flex: none;
    margin-right: 7px;
    white-space: nowrap;
}

.tool.off {
    color: #999;
}

.tool.drop .arr {
    margin: 0 0 0 5px;
}

.tool.drop-s .arr {
    margin-left: 2px;
}

.tool.active {
    height: 24px;
    padding: 0 2px;
    margin: 0 3px 0 0;
    border: 1px solid #3a8ccc;
    background-color: #d9ebf9;
}

/* menu */
.menubar {
    height: 24px;
    flex: none;
    display: flex;
    align-items: center;
    gap: 10px;
    padding: 0 0 4px 7px;
    white-space: nowrap;
}

.newjob {
    margin: 0;
    color: #222;
}

.tip {
    margin-left: 103px;
    margin-top: 3px;
    color: #2a7a96;
    width: 140px;
    overflow: hidden;
}

.phone {
    margin-left: 16px;
}

.cost {
    margin-left: 2px;
}

.ime {
    position: absolute;
    left: 837px;
    top: 0;
    width: 200px;
    height: 14px;
    overflow: hidden;
    background-color: #fff;
    border-bottom: 1px solid #a8c8e8;
}

.ime svg {
    display: block;
}

.ime-a {
    position: absolute;
    left: 29px;
    top: -3px;
    color: #2f6fc4;
    font: 16px "Liberation Sans", sans-serif;
}

.popup {
    position: absolute;
    left: 1243px;
    top: 6px;
    width: 52px;
    height: 47px;
    padding: 0;
    background-color: #f6f6f6;
    box-shadow: 0 0 5px rgba(0, 0, 0, 0.25);
}

.popup-head {
    height: 24px;
    padding: 4px 0 0 3px;
    color: #bbb;
    display: flex;
    justify-content: space-between;
}

.popup-head i {
    width: 15px;
    height: 16px;
    margin-right: 2px;
    background-color: #e2e2e2;
}

.popup-btn {
    height: 23px;
    text-align: center;
    line-height: 22px;
    background-color: #f4f4f4;
    border: 1px solid #777;
    border-right: 2px solid #555;
    border-bottom: 2px solid #555;
}

/* main toolbar */
.topbar {
    height: 28px;
    flex: none;
    display: flex;
    align-items: center;
    padding-left: 5px;
    white-space: nowrap;
}

.topbar .first {
    margin-right: 7px;
}

.topbar > .arr {
    margin: 0 9px 0 4px;
}

.topbar .sep.tall {
    height: 26px;
    margin: 0 8px 0 5px;
}

.topbar .tool {
    margin-right: 8px;
}

.topbar .tool.drop .arr {
    margin: 0 -1px 0 4px;
}

.topbar .tool.active {
    margin: 0 3px 0 0;
}

.topbar .tool.wide {
    margin-right: 12px;
}

.more {
    font-size: 14px;
    font-weight: bold;
    width: 17px;
    margin: -6px 0 0 15px;
    flex: none;
}

.more.far {
    margin-left: 40px;
    margin-right: -2px;
}

.more.end {
    margin-left: 25px;
    width: 12px;
}

.sum {
    width: 15px;
    font-size: 13px;
    text-align: center;
}

.topbar .floor {
    margin-left: 24px;
    margin-right: 0;
}

/* work area */
.work {
    height: 625px;
    margin-top: 4px;
    flex: none;
    display: flex;
}

.nav {
    width: 262px;
    flex: none;
    padding-right: 3px;
    display: flex;
    flex-direction: column;
}

.nav-title {
    height: 15px;
    flex: none;
    background-color: #0054e3;
    color: #fff;
    line-height: 15px;
    font-size: 13px;
    padding: 0 4px 0 1px;
    display: flex;
    justify-content: space-between;
}

.pin {
    font-size: 10px;
}

.nav-btn {
    height: 22px;
    flex: none;
    margin-top: 1px;
    text-align: center;
    line-height: 21px;
    background-color: #f0f0f0;
    border: 1px solid #a9a9a9;
    border-left-color: #e4e4e4;
    border-top-color: #e4e4e4;
}

.nav-btn.low {
    margin-top: 2px;
}

.nav-tools {
    height: 28px;
    flex: none;
    padding: 8px 0 0 6px;
    background-color: #f6f6f6;
}

.nav-tools svg {
    display: block;
}

.tree {
    height: 487px;
    flex: none;
    margin-left: 2px;
    background-color: #fff;
    border: 1px solid #a0a0a0;
    display: flex;
    overflow: hidden;
}

.tree-list {
    width: 237px;
    flex: none;
    margin-top: -1px;
}

.node, .leaf {
    height: 16px;
    display: flex;
    align-items: center;
    white-space: nowrap;
    position: relative;
}

.node {
    padding-left: 9px;
}

.node .ico {
    margin: 0 5px 0 14px;
}

.exp {
    position: absolute;
    left: 10px;
    top: 5px;
    width: 6px;
    height: 6px;
    border-top: 1.5px solid #aaa;
    border-right: 1.5px solid #aaa;
    transform: rotate(45deg);
}

.exp.open {
    border-color: #444;
    left: 11px;
    top: 3px;
    transform: rotate(135deg);
}

.leaf {
    padding-left: 43px;
    background:
        repeating-linear-gradient(to bottom, #777 0 1px, transparent 1px 2px) 15px 0 / 1px 100% no-repeat,
        repeating-linear-gradient(to bottom, #777 0 1px, transparent 1px 2px) 34px 0 / 1px 100% no-repeat,
        repeating-linear-gradient(to right, #777 0 1px, transparent 1px 2px) 34px 8px / 10px 1px no-repeat;
}

.leaf.last {
    background:
        repeating-linear-gradient(to bottom, #777 0 1px, transparent 1px 2px) 15px 0 / 1px 100% no-repeat,
        repeating-linear-gradient(to bottom, #777 0 1px, transparent 1px 2px) 34px 0 / 1px 8px no-repeat,
        repeating-linear-gradient(to right, #777 0 1px, transparent 1px 2px) 34px 8px / 10px 1px no-repeat;
}

.leaf .ico {
    margin-right: 4px;
}

.leaf em, .grid th em, .grid td em {
    font: 10px "Liberation Mono", monospace;
}

.sel-leaf .ico {
    margin-right: 0;
    background-color: #d4d4d4;
}

.hl {
    background-color: #d4d4d4;
    padding-left: 4px;
    height: 16px;
}

.grid-ico {
    width: 14px;
    height: 14px;
    margin-left: 1px;
    border: 1px solid #3a78c0;
    background: repeating-linear-gradient(to right, #cfe3f7 0 3px, #3a78c0 3px 4px);
}

.tag {
    align-self: flex-start;
    margin: -1px 0 0 2px;
    font: bold 8px/9px "Liberation Sans", sans-serif;
    background-color: #ffe73c;
    color: #333;
}

.tree-scroll {
    width: 16px;
    margin-left: 0;
    flex: none;
    background-color: #f0f0f0;
    position: relative;
}

.tree-thumb {
    position: absolute;
    left: 1px;
    right: 2px;
    top: 100px;
    height: 355px;
    background-color: #cdcdcd;
}

.chev {
    position: absolute;
    width: 7px;
    height: 7px;
    border-top: 1.5px solid #555;
    border-right: 1.5px solid #555;
}

.chev.up {
    left: 4px;
    top: 8px;
    transform: rotate(-45deg);
}

.chev.down {
    left: 4px;
    bottom: 8px;
    transform: rotate(135deg);
}

.chev.left {
    left: 7px;
    top: 5px;
    transform: rotate(-135deg);
}

.chev.right {
    right: 7px;
    top: 5px;
    transform: rotate(45deg);
}

/* right side */
.panel {
    width: 1103px;
    flex: none;
    display: flex;
    flex-direction: column;
    padding-left: 1px;
}

.row {
    height: 24px;
    flex: none;
    margin-bottom: 4px;
    padding-left: 6px;
    display: flex;
}

.row-b .tool {
    margin-right: 8px;
}

.row-b .tool.drop .arr {
    margin-right: -2px;
}

.row-b .tool.active {
    margin: 0 5px 0 -5px;
}

.row-b .grip + .sel {
    margin-left: -2px;
}

.tall-row {
    height: 26px;
    margin-bottom: 4px;
}

.tall-row .grip + .tool {
    margin-right: 7px;
}

.tall-row .rect-tool {
    margin-right: 6px;
}

.offset-row {
    height: 27px;
    margin: 0;
    padding-right: 1px;
    justify-content: flex-end;
}

.bar {
    display: flex;
    align-items: center;
    background-color: #f6f6f6;
    white-space: nowrap;
}

.off-all {
    color: #999;
}

.sel {
    display: flex;
    align-items: center;
    flex: none;
    height: 24px;
}

.sel b {
    font-weight: normal;
    flex: 1;
    height: 24px;
    line-height: 23px;
    padding-left: 2px;
    background-color: #fff;
    margin-right: 10px;
}

.sel .arr {
    margin-right: 6px;
}

.w55 {
    width: 55px;
}

.w60 {
    width: 60px;
}

.w72 {
    width: 72px;
}

.w75 {
    width: 75px;
}

.sel.blank {
    width: 53px;
    margin: 0 5px 0 0;
}

.stub {
    width: 26px;
    height: 26px;
    background-color: #f8f8f8;
}

.lbl {
    color: #777;
    flex: none;
    margin-right: 6px;
}

.lbl.unit {
    margin: 0 4px 0 2px;
}

.lbl.deg {
    margin: 0 7px 0 9px;
}

.sep.near {
    margin: 0 4px 0 1px;
}

.spin {
    width: 57px;
    height: 24px;
    flex: none;
    border: 1px solid #888;
    background-color: #f0f0f0;
    color: #888;
    text-align: right;
    line-height: 21px;
    padding-right: 18px;
    position: relative;
}

.spin b {
    font-weight: normal;
}

.spin::after {
    content: "";
    position: absolute;
    right: 4px;
    top: 1px;
    width: 0;
    height: 0;
    border: 3px solid transparent;
    border-bottom-color: #444;
}

.spin::before {
    content: "";
    position: absolute;
    right: 4px;
    bottom: 1px;
    width: 0;
    height: 0;
    border: 3px solid transparent;
    border-top-color: #444;
}

.check {
    width: 12px;
    height: 12px;
    flex: none;
    border: 1px solid #999;
    background-color: #fff;
    display: inline-block;
}

.check.on {
    background: #fff;
    position: relative;
}

.check.on::after {
    content: "";
    position: absolute;
    left: 2px;
    top: 1px;
    width: 7px;
    height: 4px;
    border-left: 1.5px solid #222;
    border-bottom: 1.5px solid #222;
    transform: rotate(-45deg);
}

.rot-lbl {
    margin: 0 6px 0 7px;
}

/* 3d view */
.view {
    height: 253px;
    flex: none;
    position: relative;
}

.scene {
    display: block;
}

.wire path, .thin-white path, .rebar path, .faint path, .axis-ring circle {
    fill: none;
}

.wire path {
    stroke: #fff;
    stroke-width: 2;
}

.thin-white path {
    stroke: #fff;
    stroke-width: 1.3;
}

.rebar path {
    stroke: #9d938e;
    stroke-width: 2.2;
}

.faint path {
    stroke: #aaa850;
    stroke-width: 1.5;
}

.axis-ring circle {
    stroke: #d4d268;
    stroke-width: 0.8;
}

.rebar-box {
    position: absolute;
    left: 10px;
    top: 3px;
    width: 166px;
    height: 178px;
    background-color: #fff;
    box-shadow: 1px 2px 3px rgba(0, 0, 0, 0.45);
}

.rebar-title {
    height: 32px;
    padding: 6px 0 0 8px;
    color: #a0a0a0;
}

.rebar-list {
    height: 145px;
    margin: 0 1px 0 2px;
    padding: 1px 0 0 1px;
    border: 1px solid #808080;
    border-width: 1px 2px 2px 1px;
}

.rebar-list label {
    display: flex;
    align-items: center;
    gap: 3px;
    height: 12px;
    color: #000;
    white-space: nowrap;
    line-height: 12px;
}

/* snap bar */
.snapbar {
    height: 26px;
    flex: none;
    width: 470px;
    margin: 2px 0 0 5px;
    display: flex;
    align-items: center;
    white-space: nowrap;
}

.snapbar .tool {
    margin-right: 4px;
}

.snapbar .tool.ortho {
    margin-right: 5px;
}

.snapbar .tool.wide {
    margin-right: 8px;
}

.snapbar .tool.on {
    height: 23px;
    margin: 0;
    padding: 0 2px;
    border: 1px solid #3a8ccc;
    background-color: #d9ebf9;
}

.snapbar .tool.on.s2 {
    margin-left: 1px;
    padding: 0 4px;
}

.snapbar .tool.on.s3 {
    padding: 0 1px 0 4px;
}

.snapbar .tool.on.s4 {
    padding: 0 2px 0 5px;
    margin-right: 3px;
}

.snapbar .grip {
    margin: 0 6px 0 6px;
}

.snapbar .grip:first-child {
    margin: 0 4px 0 0;
}

/* rebar editor */
.editor {
    height: 230px;
    flex: none;
    margin-top: 5px;
    display: flex;
}

.side-grip {
    width: 11px;
    flex: none;
    margin-top: -1px;
    background: radial-gradient(circle, #aaa 0.7px, transparent 1px) 2px 12px / 4px 4px repeat-y, radial-gradient(circle, #aaa 0.7px, transparent 1px) 5px 12px / 4px 4px repeat-y;
}

.x-mark {
    display: block;
    width: 9px;
    height: 9px;
    margin-left: 1px;
    border: 1px solid #666;
    background: linear-gradient(45deg, #ddd 45%, #c33 50%, #ddd 55%);
}

.editor-body {
    flex: 1;
    min-width: 0;
}

.rebar-bar {
    height: 23px;
    width: 746px;
    display: flex;
    align-items: center;
    background-color: #f6f6f6;
    white-space: nowrap;
}

.rebar-bar .tool {
    margin-right: 8px;
}

.nav-arrows {
    width: 98px;
    flex: none;
    padding-left: 10px;
    height: 14px;
    overflow: hidden;
}

.arrows {
    flex: none;
    margin: 0 4px 0 2px;
}

.total {
    flex: none;
}

.grid-box {
    margin-top: 3px;
    height: 196px;
    width: 1090px;
    border: 1px solid #c0c0c0;
    display: flex;
    flex-direction: column;
}

.grid-top {
    height: 178px;
    display: flex;
}

.grid-clip {
    width: 1072px;
    overflow: hidden;
    flex: none;
}

.grid {
    width: 1072px;
    table-layout: fixed;
    border-collapse: collapse;
}

.grid th, .grid td {
    padding: 0 0 0 2px;
    overflow: hidden;
    white-space: nowrap;
    font-weight: normal;
    border-right: 1px solid #9fb0a3;
    border-bottom: 1px solid #9fb0a3;
}

.grid th {
    height: 19px;
    text-align: center;
    padding: 0;
    background: linear-gradient(#fff, #ececec);
    border-color: #d0d0d0;
}

.grid th.cur {
    background-color: #ffc97a;
    background-image: none;
    color: #b3261a;
}

.grid th:nth-child(1), .grid td:nth-child(1) { width: 34px; }
.grid th:nth-child(2), .grid td:nth-child(2) { width: 73px; }
.grid th:nth-child(3), .grid td:nth-child(3) { width: 57px; }
.grid th:nth-child(4), .grid td:nth-child(4) { width: 35px; }
.grid th:nth-child(5), .grid td:nth-child(5) { width: 34px; }
.grid th:nth-child(6), .grid td:nth-child(6) { width: 200px; }
.grid th:nth-child(7), .grid td:nth-child(7) { width: 167px; }
.grid th:nth-child(8), .grid td:nth-child(8) { width: 155px; }
.grid th:nth-child(9), .grid td:nth-child(9) { width: 61px; }
.grid th:nth-child(10), .grid td:nth-child(10) { width: 38px; }
.grid th:nth-child(11), .grid td:nth-child(11) { width: 39px; }
.grid th:nth-child(12), .grid td:nth-child(12) { width: 49px; }
.grid th:nth-child(13), .grid td:nth-child(13) { width: 61px; }
.grid th:nth-child(14), .grid td:nth-child(14) { width: 62px; }
.grid th:nth-child(15), .grid td:nth-child(15) { width: 7px; }

.grid td {
    background-color: #c8ffd4;
}

.grid td:nth-child(2) {
    border-right: 1px solid #000;
}

.r1 td { height: 42px; }
.r2 td { height: 35px; }
.r3 td { height: 61px; }
.r4 td { height: 40px; vertical-align: top; padding-top: 5px; }

.grid td.head {
    text-align: center;
    padding: 0;
    font: 12px "Liberation Mono", monospace;
    background: linear-gradient(to right, #fff, #f0f0f0);
}

.grid .r4 td.head {
    padding-top: 6px;
}

.grid td.cur {
    background: #ffc97a;
    color: #a01c10;
}

.grid td.cell-on {
    background-color: #a9e6d4;
}

.grid td.num {
    font: 11px "Liberation Mono", monospace;
    letter-spacing: -0.6px;
}

.grid td.ctr {
    text-align: center;
    padding: 0;
}

.grid td.shape {
    padding: 0;
    vertical-align: top;
}

.shape svg {
    display: block;
    width: 199px;
    height: 100%;
    overflow: hidden;
}

.r1 svg { height: 41px; }
.r2 svg { height: 34px; }
.r3 svg { height: 60px; }
.r4 svg { height: 40px; }

.shape path {
    fill: none;
    stroke: #000;
    stroke-width: 2;
}

.shape text {
    font: 11px "Liberation Mono", monospace;
    fill: #111;
}

.vscroll {
    width: 16px;
    flex: none;
    background-color: #f0f0f0;
    position: relative;
}

.vthumb {
    position: absolute;
    left: 0;
    right: 0;
    top: 17px;
    height: 29px;
    background-color: #cdcdcd;
}

.hscroll {
    height: 16px;
    background-color: #f0f0f0;
    position: relative;
}

.hthumb {
    position: absolute;
    left: 18px;
    top: 0;
    width: 687px;
    height: 16px;
    background-color: #cdcdcd;
}

/* status */
.status {
    height: 10px;
    flex: none;
    display: flex;
    gap: 3px;
    font-size: 11px;
    line-height: 12px;
    overflow: hidden;
}

.status span {
    border: 1px solid #c8c8c8;
    border-bottom: 0;
    padding: 1px 0 0 2px;
    height: 12px;
    white-space: nowrap;
}

.st-xy { width: 148px; }
.st-h { width: 76px; padding-left: 3px; }
.st-b { width: 94px; }
.st-n { width: 50px; }
.st-fill { flex: 1; }
.st-fps { width: 69px; }
```
